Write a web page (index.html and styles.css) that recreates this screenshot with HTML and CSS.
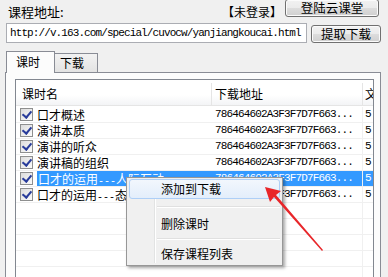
FILE: index.html
```html
<!DOCTYPE html>
<html>
<head>
<meta charset="utf-8">
<link rel="stylesheet" href="styles.css">
</head>
<body>
<div class="win">
  <div class="row1">
    <span class="lbl">课程地址:</span>
    <span class="status">【未登录】</span>
    <button class="btn btn-login">登陆云课堂</button>
  </div>
  <div class="row2">
    <div class="url">http://v.163.com/special/cuvocw/yanjiangkoucai.html</div>
    <button class="btn btn-fetch">提取下载</button>
  </div>
  <div class="tabs">
    <div class="tab active">课时</div>
    <div class="tab">下载</div>
  </div>
  <div class="panel">
    <div class="list">
      <div class="hdr">
        <div class="c1">课时名</div>
        <div class="c2">下载地址</div>
        <div class="c3">文</div>
      </div>
      <div class="rows">
        <div class="r"><div class="c1"><span class="cb"></span><span class="t">口才概述</span></div><div class="c2 hex">786464602A3F3F7D7F663...</div><div class="c3 hex">5</div></div>
        <div class="r"><div class="c1"><span class="cb"></span><span class="t">演讲本质</span></div><div class="c2 hex">786464602A3F3F7D7F663...</div><div class="c3 hex">5</div></div>
        <div class="r"><div class="c1"><span class="cb"></span><span class="t">演讲的听众</span></div><div class="c2 hex">786464602A3F3F7D7F663...</div><div class="c3 hex">5</div></div>
        <div class="r"><div class="c1"><span class="cb"></span><span class="t">演讲稿的组织</span></div><div class="c2 hex">786464602A3F3F7D7F663...</div><div class="c3 hex">5</div></div>
        <div class="r sel"><div class="c1"><span class="cb"></span><span class="t">口才的运用<span class="h">---</span>人际互动</span></div><div class="c2 hex">786464602A3F3F7D7F663...</div><div class="c3 hex">5</div></div>
        <div class="r"><div class="c1"><span class="cb"></span><span class="t">口才的运用<span class="h">---</span>态势语言</span></div><div class="c2 hex">786464602A3F3F7D7F663...</div><div class="c3 hex">5</div></div>
        <div class="r"><div class="c1"></div><div class="c2"></div><div class="c3"></div></div>
        <div class="r"><div class="c1"></div><div class="c2"></div><div class="c3"></div></div>
        <div class="r"><div class="c1"></div><div class="c2"></div><div class="c3"></div></div>
        <div class="r"><div class="c1"></div><div class="c2"></div><div class="c3"></div></div>
        <div class="r"><div class="c1"></div><div class="c2"></div><div class="c3"></div></div>
      </div>
    </div>
  </div>
  <div class="menu">
    <div class="gutter"></div>
    <div class="mi hot">添加到下载</div>
    <div class="msep s1"></div>
    <div class="mi">删除课时</div>
    <div class="msep s2"></div>
    <div class="mi">保存课程列表</div>
  </div>
  <svg class="arrow" width="80" height="80" viewBox="0 0 80 80">
    <polygon points="0,0 16,4 11,8 58,63 57,64 9,10 5,15" fill="#e8262a"/>
  </svg>
</div>
</body>
</html>
```

FILE: styles.css
```css
* { box-sizing: border-box; }
html, body { margin: 0; padding: 0; }
body {
  width: 388px;
  height: 277px;
  overflow: hidden;
  background: #f0f0f0;
  font-family: "Noto Sans CJK SC", "Liberation Sans", sans-serif;
  font-size: 12px;
  color: #000;
}
.win { position: relative; width: 388px; height: 277px; overflow: hidden; }

.row1 {
  display: flex;
  align-items: flex-start;
  height: 23px;
  padding-left: 8px;
  padding-right: 9px;
}
.lbl { margin-top: 4px; font-size: 13px; line-height: 16px; }
.status { margin-left: auto; margin-top: 4px; line-height: 16px; margin-right: 3px; }
.btn {
  font-family: "Noto Sans CJK SC", sans-serif;
  font-size: 12.5px;
  color: #000;
  border: 1px solid #707070;
  border-radius: 3px;
  background: linear-gradient(#f2f2f2 0%, #ebebeb 50%, #dddddd 51%, #cfcfcf 100%);
  box-shadow: inset 0 0 0 1px #fbfbfb;
  padding: 0;
  line-height: 14px;
}
.btn-login { width: 94px; height: 18px; margin-top: -1px; }
.row2 {
  display: flex;
  align-items: flex-start;
  padding-left: 6px;
  height: 27px;
}
.url {
  width: 301px;
  height: 20px;
  border: 1px solid #abadb3;
  background: #fff;
  font-family: "Liberation Mono", monospace;
  font-size: 11px;
  letter-spacing: -0.9px;
  line-height: 18px;
  padding-left: 3px;
  white-space: nowrap;
  overflow: hidden;
}
.btn-fetch { width: 70px; height: 18px; margin-left: 4px; margin-top: 2px; }

.tabs {
  display: flex;
  align-items: flex-end;
  padding-left: 6px;
  height: 22px;
  position: relative;
  z-index: 2;
}
.tab {
  height: 19px;
  width: 43px;
  border: 1px solid #898c95;
  border-bottom: none;
  border-left: none;
  background: linear-gradient(#f2f2f2, #e3e3e3);
  padding-left: 5px;
  line-height: 18px;
}
.tab.active {
  height: 22px;
  width: 49px;
  border-left: 1px solid #898c95;
  background: #fcfcfc;
  padding-left: 9px;
  line-height: 20px;
  margin-bottom: -1px;
}
.panel {
  margin-left: 5px;
  width: 376px;
  height: 210px;
  border: 1px solid #898c95;
  background: #fcfcfc;
  padding: 6px 7px 0 9px;
  overflow: hidden;
}
.list {
  width: 359px;
  height: 220px;
  border: 1px solid #828790;
  background: #fff;
  overflow: hidden;
}
.hdr {
  display: flex;
  height: 26px;
  padding-top: 3px;
  background: linear-gradient(#ffffff 60%, #f3f4f6);
  border-bottom: 1px solid #e5e5e5;
}
.hdr .c1, .hdr .c2, .hdr .c3 {
  line-height: 22px;
  height: 22px;
  border-right: 1px solid #e5e5e5;
}
.c1 { width: 196px; flex: none; padding-left: 6px; display: flex; align-items: center; overflow: hidden; }
.c2 { width: 151px; flex: none; padding-left: 3px; }
.c3 { width: 20px; flex: none; padding-left: 2px; overflow: hidden; }
.rows { padding-top: 1px; }
.r {
  display: flex;
  height: 16px;
  border-bottom: 1px solid #f0f0f0;
  line-height: 15px;
  overflow: hidden;
}
.r .c1 { padding-left: 4px; height: 15px; }
.r .c2 { border-right: 1px solid #f0f0f0; height: 15px; }
.hex {
  font-family: "Liberation Mono", monospace;
  font-size: 11px;
  letter-spacing: -0.85px;
  white-space: nowrap;
  overflow: hidden;
}
.cb {
  width: 13px;
  height: 13px;
  flex: none;
  border: 1px solid #8e8f8f;
  background: linear-gradient(135deg, #dcdcdc, #fbfbfb);
  position: relative;
  margin-right: 4px;
}
.cb::after {
  content: "";
  position: absolute;
  left: 3px;
  top: 0px;
  width: 4px;
  height: 7px;
  border: solid #283c9b;
  border-width: 0 2px 2px 0;
  transform: rotate(40deg);
}
.t { white-space: nowrap; height: 15px; line-height: 15px; display: block; }
.h { font-family: "Liberation Mono", monospace; font-size: 10px; }
.sel .t { background: #3399ff; color: #fff; flex: 1; padding-left: 1px; }
.sel .c2, .sel .c3 { background: #3399ff; color: #fff; }

.menu {
  position: absolute;
  left: 126px;
  top: 177px;
  width: 157px;
  background: #f0f0f0;
  border: 1px solid #979797;
  box-shadow: 2px 2px 3px rgba(0,0,0,0.35);
  padding: 1px 2px;
  z-index: 5;
}
.gutter {
  position: absolute;
  left: 27px;
  top: 2px;
  bottom: 2px;
  border-left: 1px solid #e2e3e3;
  border-right: 1px solid #fff;
}
.mi {
  position: relative;
  height: 20px;
  line-height: 18px;
  padding-left: 31px;
  border: 1px solid transparent;
}
.mi.hot {
  border-color: #aecff7;
  border-radius: 3px;
  background: linear-gradient(#f2f7fd, #e3eefb);
}
.msep {
  position: relative;
  margin-left: 28px;
}
.msep.s1 { height: 15px; padding-top: 7px; }
.msep.s2 { height: 10px; padding-top: 4px; }
.msep::before {
  content: "";
  display: block;
  border-top: 1px solid #e0e0e0;
  border-bottom: 1px solid #fff;
}
.arrow {
  position: absolute;
  left: 265px;
  top: 187px;
  z-index: 6;
}
```
